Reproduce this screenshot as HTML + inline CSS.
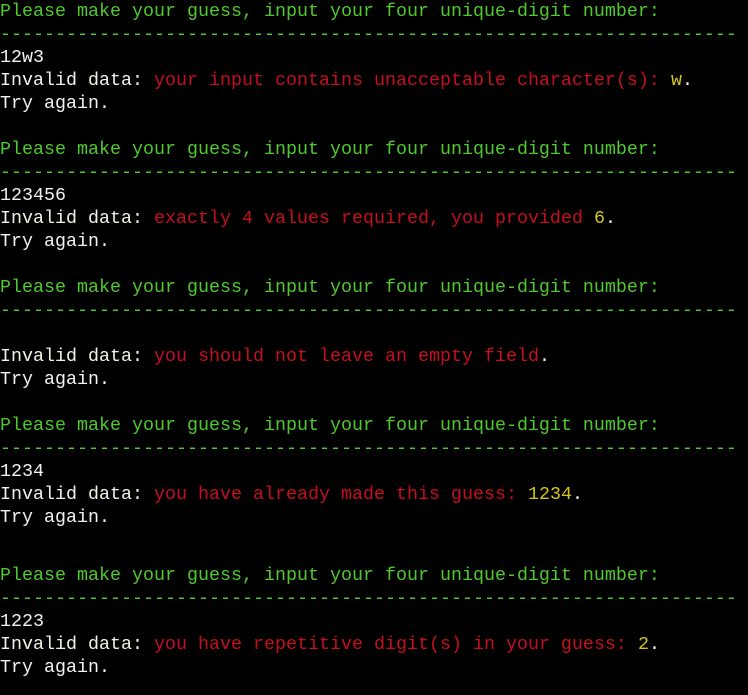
<!DOCTYPE html>
<html><head><meta charset="utf-8"><style>
html,body{margin:0;padding:0;background:#000;width:748px;height:695px;overflow:hidden}
.l{position:absolute;left:0;height:23px;line-height:23px;font-family:"Liberation Mono",monospace;font-size:18.33px;white-space:pre;color:#f2f2f2}
.g{color:#4fc92e}.r{color:#c50f1f}.y{color:#d4c41c}.w{color:#f2f2e4}
</style></head><body>
<div class="l g" style="top:0">Please make your guess, input your four unique-digit number:</div>
<div class="l g" style="top:23px">-------------------------------------------------------------------</div>
<div class="l" style="top:46px">12w3</div>
<div class="l" style="top:69px"><span class="w">Invalid data: </span><span class="r">your input contains unacceptable character(s): </span><span class="y">w</span>.</div>
<div class="l" style="top:92px">Try again.</div>
<div class="l g" style="top:138px">Please make your guess, input your four unique-digit number:</div>
<div class="l g" style="top:161px">-------------------------------------------------------------------</div>
<div class="l" style="top:184px">123456</div>
<div class="l" style="top:207px"><span class="w">Invalid data: </span><span class="r">exactly 4 values required, you provided </span><span class="y">6</span>.</div>
<div class="l" style="top:230px">Try again.</div>
<div class="l g" style="top:276px">Please make your guess, input your four unique-digit number:</div>
<div class="l g" style="top:299px">-------------------------------------------------------------------</div>
<div class="l" style="top:345px"><span class="w">Invalid data: </span><span class="r">you should not leave an empty field</span>.</div>
<div class="l" style="top:368px">Try again.</div>
<div class="l g" style="top:414px">Please make your guess, input your four unique-digit number:</div>
<div class="l g" style="top:437px">-------------------------------------------------------------------</div>
<div class="l" style="top:460px">1234</div>
<div class="l" style="top:483px"><span class="w">Invalid data: </span><span class="r">you have already made this guess: </span><span class="y">1234</span>.</div>
<div class="l" style="top:506px">Try again.</div>
<div class="l g" style="top:564px">Please make your guess, input your four unique-digit number:</div>
<div class="l g" style="top:587px">-------------------------------------------------------------------</div>
<div class="l" style="top:610px">1223</div>
<div class="l" style="top:633px"><span class="w">Invalid data: </span><span class="r">you have repetitive digit(s) in your guess: </span><span class="y">2</span>.</div>
<div class="l" style="top:656px">Try again.</div>
</body></html>
